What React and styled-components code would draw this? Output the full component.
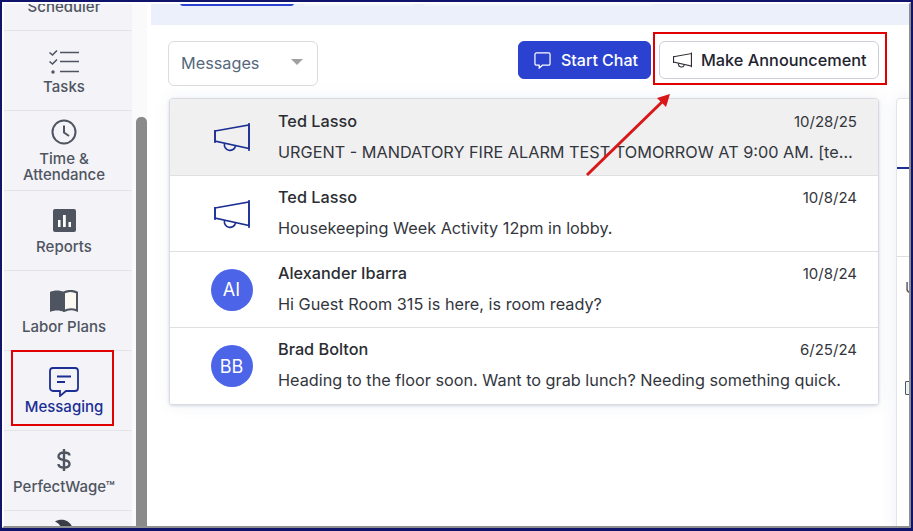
import React from "react";
import styled, { createGlobalStyle } from "styled-components";

const Global = createGlobalStyle`
  html, body { margin: 0; padding: 0; background: #fff; }
  * { box-sizing: border-box; }
  body { font-family: Inter, "Liberation Sans", sans-serif; }
`;

const Frame = styled.div`
  position: relative;
  width: 913px;
  height: 531px;
  overflow: hidden;
  background: #fff;
  border-style: solid;
  border-color: #10146b;
  border-width: 2px 2px 3px 2px;
`;
const Inner = styled.div`
  display: flex;
  height: 100%;
  border-style: solid;
  border-color: #fff #8f8f8f #8f8f8f #fff;
  border-width: 2px;
  overflow: hidden;
`;
const Sidebar = styled.nav`
  flex: 0 0 128px;
  height: 100%;
  overflow: hidden;
  background: #f3f3f8;
`;
const NavItem = styled.div`
  display: flex;
  flex-direction: column;
  align-items: center;
  justify-content: ${(p) => (p.$top ? "flex-end" : "flex-start")};
  height: 80px;
  padding-top: ${(p) => p.$pt ?? 16}px;
  padding-right: 8px;
  padding-bottom: ${(p) => (p.$top ? 15 : 0)}px;
  border-bottom: 1px solid #e3e3e8;
  margin-top: ${(p) => (p.$top ? -53 : 0)}px;
  color: ${(p) => (p.$active ? "#1c2f93" : "#4f5560")};
  font-size: 15px;
  line-height: 16px;
  font-weight: 500;
  text-align: center;
  white-space: nowrap;
`;
const NavIcon = styled.svg`
  display: block;
  flex: none;
  margin-bottom: ${(p) => p.$mb ?? 2}px;
`;
const Gutter = styled.div`
  flex: 0 0 15px;
  height: 100%;
  padding: 113px 0 0 4px;
  background: #fafafa;
`;
const Thumb = styled.div`
  width: 11px;
  height: 100%;
  background: #8a8a8a;
  border-radius: 5px 5px 0 0;
`;
const Main = styled.main`
  flex: 1;
  min-width: 0;
  display: flex;
  flex-direction: column;
  margin-left: 4px;
`;
const TabBand = styled.div`
  flex: 0 0 23px;
  display: flex;
  gap: 9px;
  align-items: flex-start;
  padding-left: 29px;
  margin-top: -2px;
  background: #ecf0fb;
`;
const Tab = styled.div`
  height: 4px;
  width: ${(p) => p.$w}px;
  border-radius: 0 0 3px 3px;
  background: ${(p) => (p.$active ? "#2a42cf" : "#f4f6fd")};
`;
const Body = styled.div`
  flex: 1;
  display: flex;
  align-items: stretch;
  gap: 17px;
  padding: 16px 0 0 17px;
  min-height: 0;
`;
const Column = styled.section`
  flex: 0 0 711px;
  display: flex;
  flex-direction: column;
`;
const Toolbar = styled.div`
  display: flex;
  align-items: flex-start;
  height: 57px;
`;
const Select = styled.div`
  display: flex;
  align-items: center;
  justify-content: space-between;
  width: 150px;
  height: 45px;
  padding: 0 14px 1px 12px;
  border: 1px solid #dcdce0;
  border-radius: 6px;
  color: #56687c;
  font-size: 16.25px;
`;
const Caret = styled.span`
  width: 0;
  height: 0;
  border-left: 6px solid transparent;
  border-right: 6px solid transparent;
  border-top: 6px solid #a0a0a0;
  margin-top: -2px;
`;
const Actions = styled.div`
  margin-left: auto;
  display: flex;
  gap: 8px;
`;
const Button = styled.button`
  display: flex;
  align-items: center;
  gap: ${(p) => p.$gap}px;
  height: 38px;
  width: ${(p) => p.$w}px;
  padding: 0 0 0 ${(p) => p.$pl}px;
  border-radius: 6px;
  border: 1px solid ${(p) => (p.$primary ? "#2a42cf" : "#cdd0d8")};
  background: ${(p) => (p.$primary ? "#2a42cf" : "#fff")};
  color: ${(p) => (p.$primary ? "#fff" : "#1f2430")};
  font-family: inherit;
  font-size: ${(p) => (p.$primary ? 16 : 16.3)}px;
  font-weight: 500;
  white-space: nowrap;
`;
const List = styled.div`
  margin-left: 1px;
  width: 710px;
  border: 1px solid #d9dae2;
  border-radius: 4px;
  box-shadow: 0 1px 3px #d5d6e2, 0 0 16px rgba(210, 212, 230, 0.3);
  overflow: hidden;
`;
const Row = styled.div`
  display: flex;
  height: ${(p) => (p.$selected ? 77 : 76)}px;
  background: ${(p) => (p.$selected ? "#f0f0f0" : "#fff")};
  border-bottom: ${(p) => (p.$last ? 0 : "1px solid #dedfe3")};
`;
const Slot = styled.div`
  flex: 0 0 108px;
  display: flex;
  align-items: center;
  justify-content: center;
  padding-left: 15px;
`;
const Avatar = styled.div`
  width: 42px;
  height: 42px;
  border-radius: 50%;
  background: #4c64e8;
  color: #fff;
  display: flex;
  align-items: center;
  justify-content: center;
  font-size: 18px;
`;
const Content = styled.div`
  flex: 1;
  min-width: 0;
  padding: ${(p) => (p.$selected ? 12 : 11)}px 21px 0 0;
`;
const TopLine = styled.div`
  display: flex;
  justify-content: space-between;
  align-items: center;
  height: 20px;
`;
const Name = styled.span`
  font-size: 16.25px;
  font-weight: 500;
  color: #2b2d33;
`;
const Stamp = styled.span`
  font-size: 15px;
  color: #33363d;
`;
const Snippet = styled.div`
  margin-top: 11px;
  height: 20px;
  line-height: 20px;
  font-size: 16.25px;
  color: #33363d;
  white-space: nowrap;
  overflow: hidden;
  text-overflow: ellipsis;
`;
const SidePanel = styled.aside`
  flex: 0 0 40px;
  margin-top: 57px;
  margin-bottom: -20px;
  border: 1px solid #e3e4ea;
  border-right: 0;
  border-radius: 4px 0 0 0;
  box-shadow: 0 0 16px rgba(210, 212, 230, 0.4);
  display: flex;
  flex-direction: column;
`;
const SideHead = styled.div`
  height: 70px;
  border-bottom: 2px solid #1c2f93;
`;
const SideSub = styled.div`
  height: 88px;
  border-bottom: 1px solid #dedfe3;
`;
const SideText = styled.div`
  padding: 21px 0 0 8px;
  height: 124px;
  font-size: 15px;
  color: #4f5560;
`;
const SideGlyph = styled.div`
  margin-left: 8px;
  width: 10px;
  height: 14px;
  border: 1px solid #4f5560;
  border-radius: 1px;
  background: #e8f4f4;
`;
const Overlay = styled.div`
  position: absolute;
  left: ${(p) => p.$x}px;
  top: ${(p) => p.$y}px;
  width: ${(p) => p.$w}px;
  height: ${(p) => p.$h}px;
  border: 2px solid #e00000;
  pointer-events: none;
`;
const ArrowSvg = styled.svg`
  position: absolute;
  left: 0;
  top: 0;
  pointer-events: none;
`;

const Megaphone = ({ color = "#1c2f93", size = 36, sw = 1.6 }) => (
  <svg width={size} height={(size * 30) / 36} viewBox="0 0 36 30" fill="none" stroke={color} strokeWidth={sw}>
    <path d="M1 9 35 3V26.500L1 19Z" />
    <path d="M1 8v13M35 1v28" />
    <path d="M10.500 21.500a5.500 5.500 0 0 0 11 2.500" />
  </svg>
);

const rows = [
  { name: "Ted Lasso", date: "10/28/25", msg: "URGENT - MANDATORY FIRE ALARM TEST TOMORROW AT 9:00 AM. [test message]", sel: true },
  { name: "Ted Lasso", date: "10/8/24", msg: "Housekeeping Week Activity 12pm in lobby." },
  { name: "Alexander Ibarra", date: "10/8/24", msg: "Hi Guest Room 315 is here, is room ready?", init: "AI" },
  { name: "Brad Bolton", date: "6/25/24", msg: "Heading to the floor soon. Want to grab lunch? Needing something quick.", init: "BB", last: true },
];

export default function App() {
  return (
    <>
      <Global />
      <Frame>
        <Inner>
          <Sidebar>
            <NavItem $top>Scheduler</NavItem>
            <NavItem $pt={18}>
              <NavIcon $mb={4} width="32" height="26" viewBox="0 0 32 26" fill="none" stroke="#4f5560" strokeWidth="1.6">
                <path d="M1.500 3.500 4.500 6l4.500-4.500M1.500 12.500 4.500 15l4.500-4.500" />
                <circle cx="5" cy="23" r="1.700" fill="#4f5560" stroke="none" />
                <path d="M12 3.500h19M12 12.500h19M12 22.500h19" />
              </NavIcon>
              Tasks
            </NavItem>
            <NavItem $pt={8}>
              <NavIcon $mb={6} width="26" height="26" viewBox="0 0 26 26" fill="none" stroke="#4f5560" strokeWidth="2">
                <circle cx="13" cy="13" r="11.500" />
                <path d="M13 6.500V13.500L18 17" />
              </NavIcon>
              Time &<br />Attendance
            </NavItem>
            <NavItem $pt={18}>
              <NavIcon $mb={7} width="23" height="23" viewBox="0 0 23 23">
                <rect width="23" height="23" rx="2" fill="#4f5560" />
                <path d="M5 11h2.500v7H5zM10 6h2.800v12H10zM15.500 13H18v5h-2.500z" fill="#fff" />
              </NavIcon>
              Reports
            </NavItem>
            <NavItem $pt={19}>
              <NavIcon $mb={7} width="28" height="22" viewBox="0 0 28 22">
                <path d="M0 2c4-2 10-2 14 0v20c-4-2-10-2-14 0Z" fill="#4f5560" />
                <path d="M14 2.500c4-2 9-2 13 0v18c-4-1.500-9-1.500-13 .5Z" fill="#fbf9f2" stroke="#4f5560" strokeWidth="2" />
              </NavIcon>
              Labor Plans
            </NavItem>
            <NavItem $active $pt={16}>
              <NavIcon $mb={2} width="30" height="30" viewBox="0 0 30 30" fill="none" stroke="#1c2f93" strokeWidth="1.800">
                <path d="M4 1h22a3 3 0 0 1 3 3v17a3 3 0 0 1-3 3H17L11 29v-5H4a3 3 0 0 1-3-3V4a3 3 0 0 1 3-3Z" />
                <path d="M8 9.500h14M8 15h8" />
              </NavIcon>
              Messaging
            </NavItem>
            <NavItem $pt={18}>
              <NavIcon $mb={8} width="14" height="22" viewBox="0 0 14 22" fill="none" stroke="#4f5560" strokeWidth="2.400">
                <path d="M12.500 6.500C12.500 4.500 10 3.500 7 3.500S1.500 5 1.500 7.500 4 10.500 7 11s5.500 1.500 5.500 4-2.500 3.500-5.500 3.500-5.500-1-5.500-3.500M7 0v22" />
              </NavIcon>
              PerfectWage™
            </NavItem>
            <NavItem $pt={8}>
              <NavIcon width="18" height="12" viewBox="0 0 20 12">
                <path d="M0 2C5-1 14-1 18 6c1 2 2 4 2 6H7C7 8 5 4 0 2Z" fill="#3a3d45" />
              </NavIcon>
            </NavItem>
          </Sidebar>
          <Gutter>
            <Thumb />
          </Gutter>
          <Main>
            <TabBand>
              <Tab $active $w={114} />
              <Tab $w={112} />
              <Tab $w={229} />
            </TabBand>
            <Body>
              <Column>
                <Toolbar>
                  <Select>
                    Messages
                    <Caret />
                  </Select>
                  <Actions>
                    <Button $primary $w={133} $pl={15} $gap={10}>
                      <svg width="17" height="17" viewBox="0 0 18 18" fill="none" stroke="#fff" strokeWidth="1.300">
                        <path d="M2.500 1h13A1.500 1.500 0 0 1 17 2.500v10a1.500 1.500 0 0 1-1.500 1.500H9l-3.500 3v-3h-3A1.500 1.500 0 0 1 1 12.500v-10A1.500 1.500 0 0 1 2.500 1Z" />
                      </svg>
                      Start Chat
                    </Button>
                    <Button $w={220} $pl={13} $gap={9}>
                      <Megaphone color="#2b2d33" size={19} sw={2} />
                      Make Announcement
                    </Button>
                  </Actions>
                </Toolbar>
                <List>
                  {rows.map((r, i) => (
                    <Row key={i} $selected={r.sel} $last={r.last}>
                      <Slot>{r.init ? <Avatar>{r.init}</Avatar> : <Megaphone />}</Slot>
                      <Content $selected={r.sel}>
                        <TopLine>
                          <Name>{r.name}</Name>
                          <Stamp>{r.date}</Stamp>
                        </TopLine>
                        <Snippet>{r.msg}</Snippet>
                      </Content>
                    </Row>
                  ))}
                </List>
              </Column>
              <SidePanel>
                <SideHead />
                <SideSub />
                <SideText>U</SideText>
                <SideGlyph />
              </SidePanel>
            </Body>
          </Main>
        </Inner>
        <Overlay $x={9} $y={348} $w={103} $h={76} />
        <Overlay $x={651} $y={30} $w={234} $h={53} />
        <ArrowSvg width="909" height="526" viewBox="2 2 909 526">
          <path d="M587 175 663 101" stroke="#d81818" strokeWidth="3" fill="none" />
          <path d="M670 94 657 98 666 107Z" fill="#d81818" />
        </ArrowSvg>
      </Frame>
    </>
  );
}
